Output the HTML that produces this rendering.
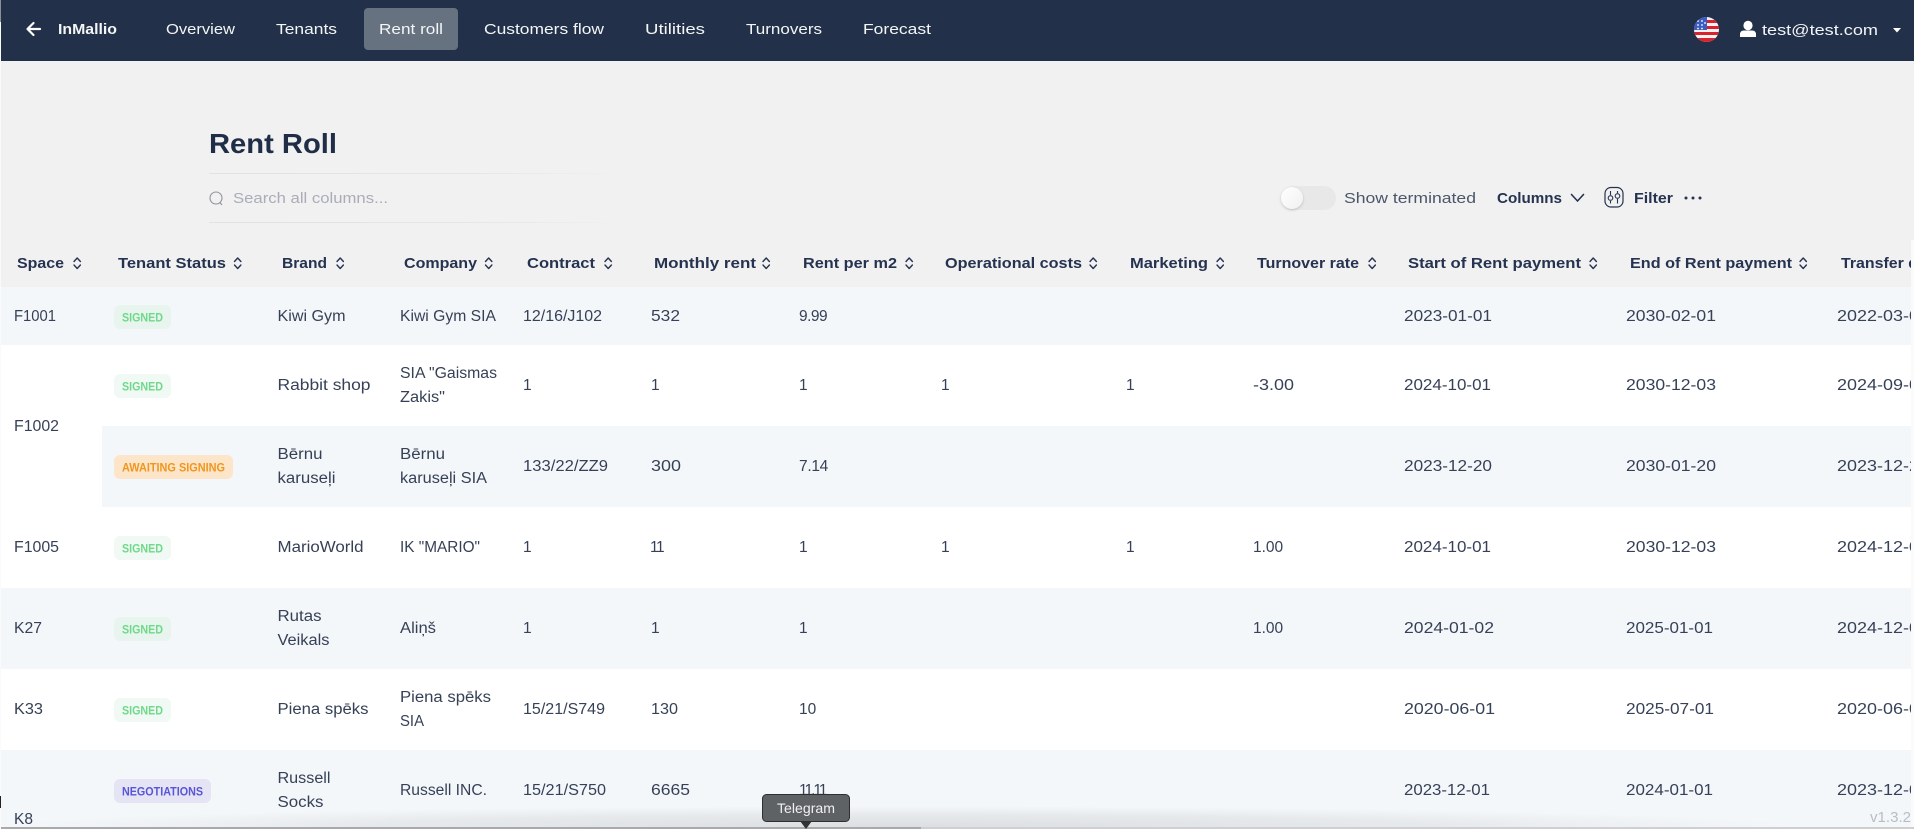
<!DOCTYPE html>
<html lang="en"><head><meta charset="utf-8"><title>Rent Roll</title>
<style>
html,body{margin:0;padding:0;width:1914px;height:829px;overflow:hidden;background:#f1f1f1}
svg{display:block}
text{font-family:"Liberation Sans",sans-serif}
.n{font-size:14.5px;fill:#f4f5f7}
.h{font-size:15px;font-weight:700;fill:#253350}
.c{font-size:15.5px;fill:#364157}
.b{font-size:12px;font-weight:700}
.s{fill:none;stroke:#253350;stroke-width:1.4;stroke-linecap:round;stroke-linejoin:round}
</style></head>
<body>
<svg width="1914" height="829" viewBox="0 0 1914 829" xmlns="http://www.w3.org/2000/svg">
<defs>
<linearGradient id="fl" x1="0" x2="1" y1="0" y2="0"><stop offset="0" stop-color="#e2e2e2"/><stop offset=".55" stop-color="#e4e4e4"/><stop offset="1" stop-color="#f1f1f1"/></linearGradient>
<radialGradient id="sh" cx=".5" cy="1" r=".5"><stop offset="0" stop-color="#c4c6c9" stop-opacity=".5"/><stop offset=".6" stop-color="#c8cacd" stop-opacity=".3"/><stop offset="1" stop-color="#d0d0d0" stop-opacity="0"/></radialGradient>
<linearGradient id="kn" x1="0" x2="1" y1="0" y2="1"><stop offset="0" stop-color="#fff"/><stop offset="1" stop-color="#f0f0f0"/></linearGradient>
<clipPath id="fc"><circle cx="1706.5" cy="29.5" r="12.5"/></clipPath>
<filter id="ks" x="-30%" y="-30%" width="160%" height="160%"><feDropShadow dx="0" dy="1" stdDeviation="1.2" flood-color="#000" flood-opacity=".2"/></filter>
<g id="sort"><path class="s" d="M1 5 L4.2 1.5 L7.4 5 M1 8.5 L4.2 12 L7.4 8.5"/></g>
</defs>

<rect width="1914" height="829" fill="#f1f1f1"/>
<!-- nav -->
<rect x="0" y="0" width="1914" height="61" fill="#223149"/>
<rect x="0" y="0" width="1" height="829" fill="#fafafa"/>
<rect x="0" y="0" width="1" height="22" fill="#8a8f98"/>
<path d="M40 29 H28 M33.5 23 L27.5 29 L33.5 35" fill="none" stroke="#fff" stroke-width="2.2" stroke-linecap="round" stroke-linejoin="round"/>
<text class="n" x="58" y="34" textLength="59" lengthAdjust="spacingAndGlyphs" font-weight="700">InMallio</text>
<rect x="364" y="8" width="94" height="42" rx="4" fill="#66727f"/>
<text class="n" x="166" y="34" textLength="69" lengthAdjust="spacingAndGlyphs">Overview</text>
<text class="n" x="276" y="34" textLength="61" lengthAdjust="spacingAndGlyphs">Tenants</text>
<text class="n" x="379" y="34" textLength="64" lengthAdjust="spacingAndGlyphs">Rent roll</text>
<text class="n" x="484" y="34" textLength="120" lengthAdjust="spacingAndGlyphs">Customers flow</text>
<text class="n" x="645" y="34" textLength="60" lengthAdjust="spacingAndGlyphs">Utilities</text>
<text class="n" x="746" y="34" textLength="76" lengthAdjust="spacingAndGlyphs">Turnovers</text>
<text class="n" x="863" y="34" textLength="68" lengthAdjust="spacingAndGlyphs">Forecast</text>

<!-- flag -->
<g clip-path="url(#fc)">
<rect x="1694" y="17" width="25" height="25" fill="#f2f2f2"/>
<rect x="1694" y="20" width="25" height="3" fill="#d8232f"/>
<rect x="1694" y="26" width="25" height="3" fill="#d8232f"/>
<rect x="1694" y="32" width="25" height="3" fill="#d8232f"/>
<rect x="1694" y="38" width="25" height="4" fill="#d8232f"/>
<rect x="1694" y="17" width="13" height="13" fill="#3b5cc0"/>
<g fill="#fff"><circle cx="1698" cy="21" r=".9"/><circle cx="1702" cy="21" r=".9"/><circle cx="1698" cy="25" r=".9"/><circle cx="1702" cy="25" r=".9"/><circle cx="1698" cy="28.5" r=".9"/><circle cx="1702" cy="28.5" r=".9"/><circle cx="1705" cy="23" r=".9"/></g>
</g>
<!-- user -->
<ellipse cx="1748" cy="25.5" rx="4.6" ry="4.8" fill="#fff"/>
<path d="M1740 37 v-2.5 q0 -4 4 -4 h8 q4 0 4 4 v2.5 z" fill="#fff"/>
<text x="1762" y="35" font-size="15" fill="#f4f5f7" textLength="116" lengthAdjust="spacingAndGlyphs">test@test.com</text>
<path d="M1893 28 h8 l-4 4.5 z" fill="#fff"/>

<!-- title -->
<text x="209" y="153" font-size="28" font-weight="700" fill="#1f2d47" textLength="128" lengthAdjust="spacingAndGlyphs">Rent Roll</text>
<rect x="209" y="173" width="420" height="1" fill="url(#fl)"/>
<rect x="209" y="222" width="420" height="1" fill="url(#fl)"/>
<circle cx="216" cy="198" r="6" fill="none" stroke="#8f949f" stroke-width="1.1"/>
<path d="M220 202.5 L222 205" stroke="#8f949f" stroke-width="1.1" fill="none"/>
<text x="233" y="203" font-size="15" fill="#a9adb8" textLength="155" lengthAdjust="spacingAndGlyphs">Search all columns...</text>

<!-- toolbar -->
<rect x="1281" y="186" width="55" height="24" rx="12" fill="#e8e8e8"/>
<circle cx="1292" cy="198" r="11" fill="url(#kn)" filter="url(#ks)"/>
<text x="1344" y="203" font-size="15" fill="#4b566a" textLength="132" lengthAdjust="spacingAndGlyphs">Show terminated</text>
<text x="1497" y="203" font-size="15" font-weight="700" fill="#253350" textLength="65" lengthAdjust="spacingAndGlyphs">Columns</text>
<path class="s" d="M1571.5 194.5 L1577.5 201 L1583.5 194.5" style="stroke-width:1.6"/>
<rect x="1605" y="187.5" width="18" height="19.5" rx="6" fill="none" stroke="#253350" stroke-width="1.2"/>
<path d="M1610.5 191 V195 M1610.5 201 V203.5 M1617.5 191 V193 M1617.5 199 V203.5" stroke="#253350" stroke-width="1.1" fill="none"/>
<circle cx="1610.5" cy="198" r="2.3" fill="none" stroke="#253350" stroke-width="1.1"/>
<circle cx="1617.5" cy="196" r="2.3" fill="none" stroke="#253350" stroke-width="1.1"/>
<text x="1634" y="203" font-size="15" font-weight="700" fill="#253350" textLength="39" lengthAdjust="spacingAndGlyphs">Filter</text>
<g fill="#253350"><circle cx="1686" cy="198" r="1.5"/><circle cx="1693" cy="198" r="1.5"/><circle cx="1700" cy="198" r="1.5"/></g>

<!-- header -->
<text class="h" x="17" y="268" textLength="47" lengthAdjust="spacingAndGlyphs">Space</text><use href="#sort" x="73" y="256.5"/>
<text class="h" x="118" y="268" textLength="108" lengthAdjust="spacingAndGlyphs">Tenant Status</text><use href="#sort" x="233.5" y="256.5"/>
<text class="h" x="282" y="268" textLength="45" lengthAdjust="spacingAndGlyphs">Brand</text><use href="#sort" x="336" y="256.5"/>
<text class="h" x="404" y="268" textLength="73" lengthAdjust="spacingAndGlyphs">Company</text><use href="#sort" x="484.5" y="256.5"/>
<text class="h" x="527" y="268" textLength="68" lengthAdjust="spacingAndGlyphs">Contract</text><use href="#sort" x="604" y="256.5"/>
<text class="h" x="654" y="268" textLength="102" lengthAdjust="spacingAndGlyphs">Monthly rent</text><use href="#sort" x="762" y="256.5"/>
<text class="h" x="803" y="268" textLength="94" lengthAdjust="spacingAndGlyphs">Rent per m2</text><use href="#sort" x="905" y="256.5"/>
<text class="h" x="945" y="268" textLength="137" lengthAdjust="spacingAndGlyphs">Operational costs</text><use href="#sort" x="1089" y="256.5"/>
<text class="h" x="1130" y="268" textLength="78" lengthAdjust="spacingAndGlyphs">Marketing</text><use href="#sort" x="1216" y="256.5"/>
<text class="h" x="1257" y="268" textLength="102" lengthAdjust="spacingAndGlyphs">Turnover rate</text><use href="#sort" x="1368" y="256.5"/>
<text class="h" x="1408" y="268" textLength="173" lengthAdjust="spacingAndGlyphs">Start of Rent payment</text><use href="#sort" x="1589" y="256.5"/>
<text class="h" x="1630" y="268" textLength="162" lengthAdjust="spacingAndGlyphs">End of Rent payment</text><use href="#sort" x="1799" y="256.5"/>
<text class="h" x="1841" y="268" textLength="100" lengthAdjust="spacingAndGlyphs">Transfer date</text>

<!-- rows bg -->
<rect x="1" y="287" width="1913" height="58" fill="#f4f7fa"/>
<rect x="1" y="345" width="1913" height="81" fill="#fff"/>
<rect x="1" y="426" width="1913" height="81" fill="#f4f7fa"/>
<rect x="1" y="426" width="101" height="81" fill="#fff"/>
<rect x="1" y="507" width="1913" height="81" fill="#fff"/>
<rect x="1" y="588" width="1913" height="81" fill="#f4f7fa"/>
<rect x="1" y="669" width="1913" height="81" fill="#fff"/>
<rect x="1" y="750" width="1913" height="79" fill="#f4f7fa"/>
<!-- bottom shadow -->
<rect x="0" y="785" width="1800" height="42" fill="url(#sh)"/>

<!-- row 1 -->
<text class="c" x="14" y="321" textLength="42" lengthAdjust="spacingAndGlyphs">F1001</text>
<rect x="114" y="305" width="57" height="24" rx="6" fill="#e8f4ee"/>
<text class="b" x="122" y="321.5" fill="#6fd98a" textLength="41" lengthAdjust="spacingAndGlyphs">SIGNED</text>
<text class="c" x="277.5" y="321" textLength="68" lengthAdjust="spacingAndGlyphs">Kiwi Gym</text>
<text class="c" x="400" y="321" textLength="96" lengthAdjust="spacingAndGlyphs">Kiwi Gym SIA</text>
<text class="c" x="523" y="321" textLength="79" lengthAdjust="spacingAndGlyphs">12/16/J102</text>
<text class="c" x="651" y="321" textLength="29" lengthAdjust="spacingAndGlyphs">532</text>
<text class="c" x="799" y="321" style="letter-spacing:-.5px">9.99</text>
<text class="c" x="1404" y="321" textLength="88" lengthAdjust="spacingAndGlyphs">2023-01-01</text>
<text class="c" x="1626" y="321" textLength="90" lengthAdjust="spacingAndGlyphs">2030-02-01</text>
<text class="c" x="1837" y="321" textLength="92" lengthAdjust="spacingAndGlyphs">2022-03-01</text>

<!-- row 2 -->
<text class="c" x="14" y="431" textLength="45" lengthAdjust="spacingAndGlyphs">F1002</text>
<rect x="114" y="374" width="57" height="24" rx="6" fill="#f0f9f3"/>
<text class="b" x="122" y="390.5" fill="#6fd98a" textLength="41" lengthAdjust="spacingAndGlyphs">SIGNED</text>
<text class="c" x="277.5" y="390" textLength="93" lengthAdjust="spacingAndGlyphs">Rabbit shop</text>
<text class="c" x="400" y="378" textLength="97" lengthAdjust="spacingAndGlyphs">SIA "Gaismas</text>
<text class="c" x="400" y="402" textLength="45" lengthAdjust="spacingAndGlyphs">Zakis"</text>
<text class="c" x="523" y="390">1</text>
<text class="c" x="651" y="390">1</text>
<text class="c" x="799" y="390">1</text>
<text class="c" x="941" y="390">1</text>
<text class="c" x="1126" y="390">1</text>
<text class="c" x="1253" y="390" textLength="41" lengthAdjust="spacingAndGlyphs">-3.00</text>
<text class="c" x="1404" y="390" textLength="87" lengthAdjust="spacingAndGlyphs">2024-10-01</text>
<text class="c" x="1626" y="390" textLength="90" lengthAdjust="spacingAndGlyphs">2030-12-03</text>
<text class="c" x="1837" y="390" textLength="92" lengthAdjust="spacingAndGlyphs">2024-09-01</text>

<!-- row 3 -->
<rect x="114" y="455" width="119" height="24" rx="6" fill="#fde5c9"/>
<text class="b" x="122" y="471.5" fill="#f0961e" textLength="103" lengthAdjust="spacingAndGlyphs">AWAITING SIGNING</text>
<text class="c" x="277.5" y="459" textLength="45" lengthAdjust="spacingAndGlyphs">Bērnu</text>
<text class="c" x="277.5" y="483" textLength="58" lengthAdjust="spacingAndGlyphs">karuseļi</text>
<text class="c" x="400" y="459" textLength="45" lengthAdjust="spacingAndGlyphs">Bērnu</text>
<text class="c" x="400" y="483" textLength="87" lengthAdjust="spacingAndGlyphs">karuseļi SIA</text>
<text class="c" x="523" y="471" textLength="85" lengthAdjust="spacingAndGlyphs">133/22/ZZ9</text>
<text class="c" x="651" y="471" textLength="30" lengthAdjust="spacingAndGlyphs">300</text>
<text class="c" x="799" y="471" style="letter-spacing:-.3px">7.14</text>
<text class="c" x="1404" y="471" textLength="88" lengthAdjust="spacingAndGlyphs">2023-12-20</text>
<text class="c" x="1626" y="471" textLength="90" lengthAdjust="spacingAndGlyphs">2030-01-20</text>
<text class="c" x="1837" y="471" textLength="92" lengthAdjust="spacingAndGlyphs">2023-12-20</text>

<!-- row 4 -->
<text class="c" x="14" y="552" textLength="45" lengthAdjust="spacingAndGlyphs">F1005</text>
<rect x="114" y="536" width="57" height="24" rx="6" fill="#f0f9f3"/>
<text class="b" x="122" y="552.5" fill="#6fd98a" textLength="41" lengthAdjust="spacingAndGlyphs">SIGNED</text>
<text class="c" x="277.5" y="552" textLength="86" lengthAdjust="spacingAndGlyphs">MarioWorld</text>
<text class="c" x="400" y="552" textLength="80" lengthAdjust="spacingAndGlyphs">IK "MARIO"</text>
<text class="c" x="523" y="552">1</text>
<text class="c" x="650" y="552" style="letter-spacing:-1.5px">11</text>
<text class="c" x="799" y="552">1</text>
<text class="c" x="941" y="552">1</text>
<text class="c" x="1126" y="552">1</text>
<text class="c" x="1253" y="552">1.00</text>
<text class="c" x="1404" y="552" textLength="87" lengthAdjust="spacingAndGlyphs">2024-10-01</text>
<text class="c" x="1626" y="552" textLength="90" lengthAdjust="spacingAndGlyphs">2030-12-03</text>
<text class="c" x="1837" y="552" textLength="92" lengthAdjust="spacingAndGlyphs">2024-12-01</text>

<!-- row 5 -->
<text class="c" x="14" y="633" textLength="28" lengthAdjust="spacingAndGlyphs">K27</text>
<rect x="114" y="617" width="57" height="24" rx="6" fill="#e8f4ee"/>
<text class="b" x="122" y="633.5" fill="#6fd98a" textLength="41" lengthAdjust="spacingAndGlyphs">SIGNED</text>
<text class="c" x="277.5" y="621" textLength="44" lengthAdjust="spacingAndGlyphs">Rutas</text>
<text class="c" x="277.5" y="645" textLength="52" lengthAdjust="spacingAndGlyphs">Veikals</text>
<text class="c" x="400" y="633" textLength="36" lengthAdjust="spacingAndGlyphs">Aliņš</text>
<text class="c" x="523" y="633">1</text>
<text class="c" x="651" y="633">1</text>
<text class="c" x="799" y="633">1</text>
<text class="c" x="1253" y="633">1.00</text>
<text class="c" x="1404" y="633" textLength="90" lengthAdjust="spacingAndGlyphs">2024-01-02</text>
<text class="c" x="1626" y="633" textLength="87" lengthAdjust="spacingAndGlyphs">2025-01-01</text>
<text class="c" x="1837" y="633" textLength="92" lengthAdjust="spacingAndGlyphs">2024-12-01</text>

<!-- row 6 -->
<text class="c" x="14" y="714" textLength="29" lengthAdjust="spacingAndGlyphs">K33</text>
<rect x="114" y="698" width="57" height="24" rx="6" fill="#f0f9f3"/>
<text class="b" x="122" y="714.5" fill="#6fd98a" textLength="41" lengthAdjust="spacingAndGlyphs">SIGNED</text>
<text class="c" x="277.5" y="714" textLength="91" lengthAdjust="spacingAndGlyphs">Piena spēks</text>
<text class="c" x="400" y="702" textLength="91" lengthAdjust="spacingAndGlyphs">Piena spēks</text>
<text class="c" x="400" y="726" textLength="24" lengthAdjust="spacingAndGlyphs">SIA</text>
<text class="c" x="523" y="714" textLength="82" lengthAdjust="spacingAndGlyphs">15/21/S749</text>
<text class="c" x="651" y="714" textLength="27" lengthAdjust="spacingAndGlyphs">130</text>
<text class="c" x="799" y="714">10</text>
<text class="c" x="1404" y="714" textLength="91" lengthAdjust="spacingAndGlyphs">2020-06-01</text>
<text class="c" x="1626" y="714" textLength="88" lengthAdjust="spacingAndGlyphs">2025-07-01</text>
<text class="c" x="1837" y="714" textLength="92" lengthAdjust="spacingAndGlyphs">2020-06-01</text>

<!-- row 7 -->
<rect x="114" y="779" width="97" height="24" rx="6" fill="#e5e4f5"/>
<text class="b" x="122" y="795.5" fill="#5a55d6" textLength="81" lengthAdjust="spacingAndGlyphs">NEGOTIATIONS</text>
<text class="c" x="277.5" y="783" textLength="53" lengthAdjust="spacingAndGlyphs">Russell</text>
<text class="c" x="277.5" y="807" textLength="46" lengthAdjust="spacingAndGlyphs">Socks</text>
<text class="c" x="400" y="795" textLength="87" lengthAdjust="spacingAndGlyphs">Russell INC.</text>
<text class="c" x="523" y="795" textLength="83" lengthAdjust="spacingAndGlyphs">15/21/S750</text>
<text class="c" x="651" y="795" textLength="39" lengthAdjust="spacingAndGlyphs">6665</text>
<text class="c" x="799" y="795" style="letter-spacing:-2px">11.11</text>
<text class="c" x="1404" y="795" textLength="86" lengthAdjust="spacingAndGlyphs">2023-12-01</text>
<text class="c" x="1626" y="795" textLength="87" lengthAdjust="spacingAndGlyphs">2024-01-01</text>
<text class="c" x="1837" y="795" textLength="92" lengthAdjust="spacingAndGlyphs">2023-12-01</text>
<text class="c" x="14" y="824" textLength="19" lengthAdjust="spacingAndGlyphs">K8</text>

<!-- right strip -->
<rect x="1911" y="240" width="3" height="589" fill="#fafafa"/>

<!-- scrollbar -->
<rect x="1" y="827" width="1913" height="2" fill="#cfcfcf"/>
<rect x="1" y="827" width="920" height="2" fill="#a9a9a9"/>
<text x="1870" y="822" font-size="15" fill="#b8bcc4" textLength="41" lengthAdjust="spacingAndGlyphs">v1.3.2</text>
<rect x="0" y="796" width="1" height="12" fill="#222"/>

<!-- tooltip -->
<path d="M800 821 L806 829 L812 821 z" fill="#333"/>
<rect x="762.5" y="794.5" width="87" height="27" rx="4" fill="#5f6265" stroke="#2f2f2f"/>
<text x="777" y="813" font-size="14" fill="#f0f0f0" textLength="58" lengthAdjust="spacingAndGlyphs">Telegram</text>
</svg>
</body></html>
